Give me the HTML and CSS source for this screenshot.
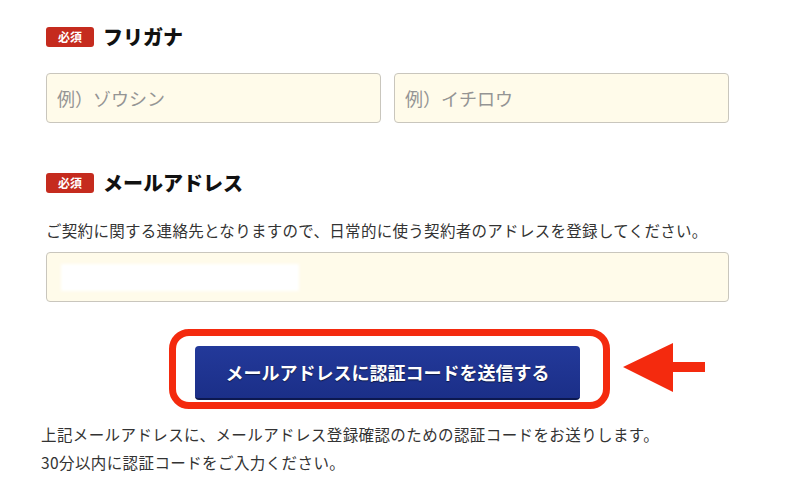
FILE: index.html
```html
<!DOCTYPE html>
<html lang="ja">
<head>
  <meta charset="UTF-8">
  <title>会員登録</title>
  <link rel="stylesheet" href="styles.css">
</head>
<body>
  <div class="form">
    <!--フリガナ-->
    <div class="label">
      <span class="req">必須</span>
      <h2>フリガナ</h2>
    </div>
    <div class="names">
      <input class="field" type="text" placeholder="例）ゾウシン">
      <input class="field" type="text" placeholder="例）イチロウ">
    </div>

    <!--メールアドレス-->
    <div class="label label-mail">
      <span class="req">必須</span>
      <h2>メールアドレス</h2>
    </div>
    <p class="desc">ご契約に関する連絡先となりますので、日常的に使う契約者のアドレスを登録してください。</p>
    <div class="field field-mail"><span class="mask"></span></div>

    <div class="submit">
      <div class="frame">
        <button class="btn" type="button">メールアドレスに認証コードを送信する</button>
      </div>
      <svg class="arrow" width="84" height="52" viewBox="0 0 84 52">
        <polygon points="0,24 50,0 50,19 82,19 82,29 50,29 50,49" fill="#f42a0e" />
      </svg>
    </div>

    <p class="note">上記メールアドレスに、メールアドレス登録確認のための認証コードをお送りします。<br>30分以内に認証コードをご入力ください。</p>
  </div>
</body>
</html>
```

FILE: styles.css
```css
* {
  margin: 0;
  padding: 0;
  box-sizing: border-box;
}

body {
  background-color: #fff;
  color: #222;
  font-family: "Noto Sans CJK JP", "Noto Sans", sans-serif;
}

.form {
  width: 683px;
  margin-left: 46px;
  padding-top: 27px;
}

/*見出し*/
.label {
  display: flex;
  align-items: center;
  height: 20px;
}

.label-mail {
  margin-top: 50px;
}

.req {
  width: 48px;
  height: 20px;
  line-height: 20px;
  border-radius: 3px;
  background-color: #c52b1e;
  color: #fff;
  font-size: 12px;
  font-weight: bold;
  text-align: center;
}

.label h2 {
  margin-left: 9px;
  font-size: 20px;
  font-weight: 900;
  line-height: 20px;
  color: #111;
}

/*入力欄*/
.names {
  display: flex;
  gap: 13px;
  margin-top: 26px;
}

.field {
  width: 335px;
  height: 50px;
  padding: 0 10px;
  border: 1px solid #c9c6bd;
  border-radius: 4px;
  background-color: #fffbea;
  font-family: inherit;
  font-size: 18px;
  color: #333;
  outline: none;
}

.field::placeholder {
  color: #949494;
}

.desc {
  margin-top: 25px;
  font-size: 15.5px;
  letter-spacing: 0.3px;
  line-height: 24px;
  color: #333;
}

.field-mail {
  width: 683px;
  height: 50px;
  margin-top: 10px;
  padding-left: 14px;
  display: flex;
  align-items: center;
}

.mask {
  display: block;
  width: 238px;
  height: 27px;
  background-color: #fff;
  filter: blur(1.5px);
}

/*送信ボタン*/
.submit {
  position: relative;
  display: flex;
  margin-top: 27px;
  padding-left: 123px;
}

.frame {
  padding: 10px 23px 2px 19px;
  border: 7px solid #f42a0e;
  border-radius: 20px;
}

.btn {
  display: block;
  width: 385px;
  height: 54px;
  border: none;
  border-bottom: 2px solid #0c1850;
  border-radius: 4px;
  background: linear-gradient(#23399a, #1b2f88);
  color: #fff;
  font-family: inherit;
  font-size: 18px;
  font-weight: bold;
  text-shadow: 0 1px 1px rgba(0, 0, 0, 0.5);
}

/*矢印*/
.arrow {
  position: absolute;
  left: 577px;
  top: 14px;
}

.note {
  margin-top: 11px;
  margin-left: -5px;
  font-size: 15.5px;
  letter-spacing: 0.4px;
  line-height: 28px;
  color: #333;
}
```
